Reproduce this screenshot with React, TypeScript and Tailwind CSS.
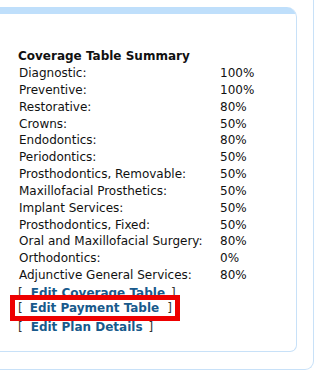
import React from 'react';

const rows: [string, string][] = [
  ['Diagnostic:', '100%'],
  ['Preventive:', '100%'],
  ['Restorative:', '80%'],
  ['Crowns:', '50%'],
  ['Endodontics:', '80%'],
  ['Periodontics:', '50%'],
  ['Prosthodontics, Removable:', '50%'],
  ['Maxillofacial Prosthetics:', '50%'],
  ['Implant Services:', '50%'],
  ['Prosthodontics, Fixed:', '50%'],
  ['Oral and Maxillofacial Surgery:', '80%'],
  ['Orthodontics:', '0%'],
  ['Adjunctive General Services:', '80%'],
];

const EditLink: React.FC<{ label: string }> = ({ label }) => (
  <div className="flex items-center h-[17px] leading-[17px]">
    <span className="text-[#333] font-normal">[</span>
    <a href="#" className="ml-[8px] mr-[6px] font-bold text-[#185a8c] no-underline">
      {label}
    </a>
    <span className="text-[#333] font-normal">]</span>
  </div>
);

export default function App() {
  return (
    <div
      className="w-[326px] h-[380px] bg-white overflow-hidden text-[12px] text-[#111]"
      style={{ fontFamily: '"DejaVu Sans", Verdana, sans-serif' }}
    >
      <div className="-mt-[10px] -ml-[10px] w-[324px] h-[380px] border-r border-b border-[#c8e1f8] rounded-br-[9px] pt-[17px]">
        <div className="w-[307px] h-[345px] border-r border-b border-[#c8e1f8] rounded-tr-[10px] rounded-br-[7px] overflow-hidden">
          <div className="h-[7px] bg-[#bfdffb]" />
          <div className="pl-[28px] pt-[34px]">
            <div className="font-bold leading-[17px] h-[17px]">Coverage Table Summary</div>
            <div className="pl-[1px]">
              {rows.map(([label, pct]) => (
                <div key={label} className="flex h-[16.85px] leading-[16.85px]">
                  <span className="w-[201px] shrink-0 whitespace-nowrap">{label}</span>
                  <span>{pct}</span>
                </div>
              ))}
            </div>
            <div className="mt-[1px]">
              <EditLink label="Edit Coverage Table" />
              {/* highlighted row */}
              <div className="relative -mt-[7px] -mb-[2px] -ml-[8px] w-[170px] h-[26px] border-[5px] border-[#ee0000] bg-white flex items-center pl-[3px]">
                <span className="text-[#333]">[</span>
                <a href="#" className="ml-[7px] mr-[8px] font-bold text-[#185a8c] no-underline">
                  Edit Payment Table
                </a>
                <span className="text-[#333]">]</span>
              </div>
              <EditLink label="Edit Plan Details" />
            </div>
          </div>
        </div>
      </div>
    </div>
  );
}
